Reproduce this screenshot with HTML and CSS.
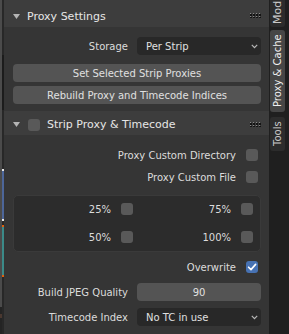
FILE: index.html
```html
<!DOCTYPE html>
<html>
<head>
<meta charset="utf-8">
<link rel="stylesheet" href="styles.css">
</head>
<body>
<div class="app">
  <div class="edge">
    <div class="edge-a"></div>
    <div class="edge-b">
      <div class="seg-dark"></div>
      <div class="mk mk-w first"></div>
      <div class="bar bar-blue"></div>
      <div class="mk mk-w"></div>
      <div class="mk mk-o second"></div>
      <div class="bar bar-teal"></div>
      <div class="mk mk-o"></div>
    </div>
  </div>

  <div class="region">
    <section class="panel">
      <div class="phead ph1">
        <svg class="tri" width="7" height="5" viewBox="0 0 7 5"><polygon points="0,0 7,0 3.5,5" fill="#b4b4b4"/></svg>
        <span class="ptitle">Proxy Settings</span>
        <svg class="grip" width="11" height="5" viewBox="0 0 11 5"><g fill="#141414"><rect x="0" y="1" width="2" height="2"/><rect x="3" y="1" width="2" height="2"/><rect x="6" y="1" width="2" height="2"/><rect x="9" y="1" width="2" height="2"/><rect x="0" y="4" width="2" height="1"/><rect x="3" y="4" width="2" height="1"/><rect x="6" y="4" width="2" height="1"/><rect x="9" y="4" width="2" height="1"/></g><g fill="#8a8a8a"><rect x="0" y="0" width="1" height="1"/><rect x="3" y="0" width="1" height="1"/><rect x="6" y="0" width="1" height="1"/><rect x="9" y="0" width="1" height="1"/><rect x="0" y="3" width="1" height="1"/><rect x="3" y="3" width="1" height="1"/><rect x="6" y="3" width="1" height="1"/><rect x="9" y="3" width="1" height="1"/></g></svg>
      </div>
      <div class="pbody pb1">
        <div class="prop">
          <span class="label">Storage</span>
          <div class="menu"><span>Per Strip</span><svg class="chev" width="7" height="5" viewBox="0 0 7 5"><polyline points="0.8,0.8 3.5,3.6 6.2,0.8" fill="none" stroke="#b8b8b8" stroke-width="1.2"/></svg></div>
        </div>
        <div class="btn b1">Set Selected Strip Proxies</div>
        <div class="btn b2">Rebuild Proxy and Timecode Indices</div>
      </div>
    </section>

    <section class="panel grow">
      <div class="phead ph2">
        <svg class="tri" width="7" height="5" viewBox="0 0 7 5"><polygon points="0,0 7,0 3.5,5" fill="#b4b4b4"/></svg>
        <span class="cb hcb"></span>
        <span class="ptitle">Strip Proxy &amp; Timecode</span>
        <svg class="grip" width="11" height="5" viewBox="0 0 11 5"><g fill="#141414"><rect x="0" y="1" width="2" height="2"/><rect x="3" y="1" width="2" height="2"/><rect x="6" y="1" width="2" height="2"/><rect x="9" y="1" width="2" height="2"/><rect x="0" y="4" width="2" height="1"/><rect x="3" y="4" width="2" height="1"/><rect x="6" y="4" width="2" height="1"/><rect x="9" y="4" width="2" height="1"/></g><g fill="#8a8a8a"><rect x="0" y="0" width="1" height="1"/><rect x="3" y="0" width="1" height="1"/><rect x="6" y="0" width="1" height="1"/><rect x="9" y="0" width="1" height="1"/><rect x="0" y="3" width="1" height="1"/><rect x="3" y="3" width="1" height="1"/><rect x="6" y="3" width="1" height="1"/><rect x="9" y="3" width="1" height="1"/></g></svg>
      </div>
      <div class="pbody pb2">
        <div class="check-row"><span>Proxy Custom Directory</span><span class="cb"></span></div>
        <div class="check-row"><span>Proxy Custom File</span><span class="cb"></span></div>
        <div class="box">
          <div class="cell"><span>25%</span><span class="cb"></span></div>
          <div class="cell"><span>75%</span><span class="cb"></span></div>
          <div class="cell"><span>50%</span><span class="cb"></span></div>
          <div class="cell"><span>100%</span><span class="cb"></span></div>
        </div>
        <div class="check-row ow"><span>Overwrite</span><span class="cb on"><svg width="12" height="12" viewBox="0 0 12 12"><polyline points="2.6,6.2 5,8.6 9.6,3.4" fill="none" stroke="#ffffff" stroke-width="1.6" stroke-linecap="round" stroke-linejoin="round"/></svg></span></div>
        <div class="prop p-jpeg">
          <span class="label">Build JPEG Quality</span>
          <div class="num">90</div>
        </div>
        <div class="prop p-tc">
          <span class="label">Timecode Index</span>
          <div class="menu"><span>No TC in use</span><svg class="chev" width="7" height="5" viewBox="0 0 7 5"><polyline points="0.8,0.8 3.5,3.6 6.2,0.8" fill="none" stroke="#b8b8b8" stroke-width="1.2"/></svg></div>
        </div>
      </div>
    </section>
  </div>

  <div class="tabs">
    <div class="tab t-mod"><span>Modifiers</span></div>
    <div class="tab t-proxy active"><span>Proxy &amp; Cache</span></div>
    <div class="tab t-tools"><span>Tools</span></div>
  </div>
</div>
</body>
</html>
```

FILE: styles.css
```css
* { box-sizing: border-box; }
html, body { margin: 0; padding: 0; }
body {
  width: 289px;
  height: 334px;
  overflow: hidden;
  background: #303030;
  font-family: "DejaVu Sans", "Liberation Sans", sans-serif;
  font-size: 10px;
  color: #dcdcdc;
}
.app { display: flex; height: 334px; }

/* left edge with timeline strips */
.edge { width: 4px; display: flex; flex: none; }
.edge-a {
  width: 2px;
  background: linear-gradient(#4b4b4b 0 307px, #242424 307px 314px, #4a3830 314px 318px, #242424 318px);
}
.edge-b { width: 2px; background: #282828; display: flex; flex-direction: column; }
.seg-dark { margin-top: 55px; height: 55px; background: #1c1c1c; }
.mk { height: 2px; }
.mk-w { background: #e8e8e8; }
.mk-o { background: #e0600c; }
.first { margin-top: 59px; }
.second { margin-top: 4px; }
.bar { height: 48px; }
.bar-blue { background: #4d6699; }
.bar-teal { background: #3b8a88; }

/* region */
.region { width: 265px; flex: none; display: flex; flex-direction: column; background: #353535; }
.panel { display: flex; flex-direction: column; }
.panel.grow { flex: 1; }
.phead {
  display: flex;
  align-items: center;
  background: #3d3d3d;
  padding-left: 9px;
  padding-right: 8px;
  font-size: 11px;
  color: #e6e6e6;
}
.ph1 { height: 27px; padding-top: 5px; }
.ph2 { height: 24px; padding-top: 3px; }
.tri { flex: none; display: block; }
.ph1 .tri { margin-right: 7px; }
.ph2 .tri { margin-right: 8px; }
.hcb { margin-left: 0 !important; margin-right: 7px; }
.grip { margin-left: auto; display: block; }
.ph1 .grip { margin-top: -2px; }

.pbody { display: flex; flex-direction: column; padding-left: 9px; padding-right: 8px; }
.pb1 { padding-top: 10px; padding-bottom: 7px; }
.pb2 { padding-top: 9px; }

.prop {
  display: grid;
  grid-template-columns: 1fr 124px;
  column-gap: 9px;
  align-items: center;
  height: 18px;
}
.label { text-align: right; white-space: nowrap; }
.menu {
  height: 18px;
  background: #282828;
  border-radius: 4px;
  display: flex;
  align-items: center;
  justify-content: space-between;
  padding: 0 3px 0 9px;
  color: #e0e0e0;
}
.chev { display: block; }
.btn {
  height: 18px;
  background: #545454;
  border-radius: 4px;
  display: flex;
  align-items: center;
  justify-content: center;
  color: #e0e0e0;
}
.b1 { margin-top: 9px; }
.b2 { margin-top: 4px; }

.check-row {
  height: 22px;
  display: flex;
  justify-content: flex-end;
  align-items: center;
  padding-right: 3px;
}
.cb {
  width: 12px;
  height: 12px;
  border-radius: 3px;
  background: #595959;
  margin-left: 10px;
  flex: none;
  display: block;
}
.cb svg { display: block; }
.cb.on { background: #4772b3; }

.box {
  margin-top: 7px;
  border: 1px solid #3a3a3a;
  border-radius: 5px;
  background: #2c2c2c;
  padding: 2px 7px 3px;
  display: grid;
  grid-template-columns: 1fr 1fr;
  column-gap: 8px;
  row-gap: 6px;
}
.cell { height: 22px; display: flex; justify-content: flex-end; align-items: center; }
.ow { margin-top: 4px; }
.p-jpeg { margin-top: 5px; }
.p-tc { margin-top: 7px; }
.num {
  height: 18px;
  background: #545454;
  border-radius: 4px;
  display: flex;
  align-items: center;
  justify-content: center;
  color: #e0e0e0;
}

/* tabs */
.tabs {
  width: 20px;
  flex: none;
  background: #1f1f1f;
  display: flex;
  flex-direction: column;
  padding-left: 1px;
  overflow: hidden;
}
.tab {
  width: 15px;
  flex: none;
  writing-mode: vertical-lr;
  transform: rotate(180deg);
  display: flex;
  align-items: center;
  justify-content: center;
  background: #2c2c2c;
  border-radius: 3px;
  color: #c8c8c8;
  white-space: nowrap;
  overflow: hidden;
}
.tab.active { background: #464646; color: #f0f0f0; }
.t-mod { height: 37px; margin-top: -10px; justify-content: flex-start; padding-top: 3px; font-size: 11px; }
.t-proxy { height: 82px; margin-top: 3px; }
.t-tools { height: 34px; margin-top: 5px; }
```
